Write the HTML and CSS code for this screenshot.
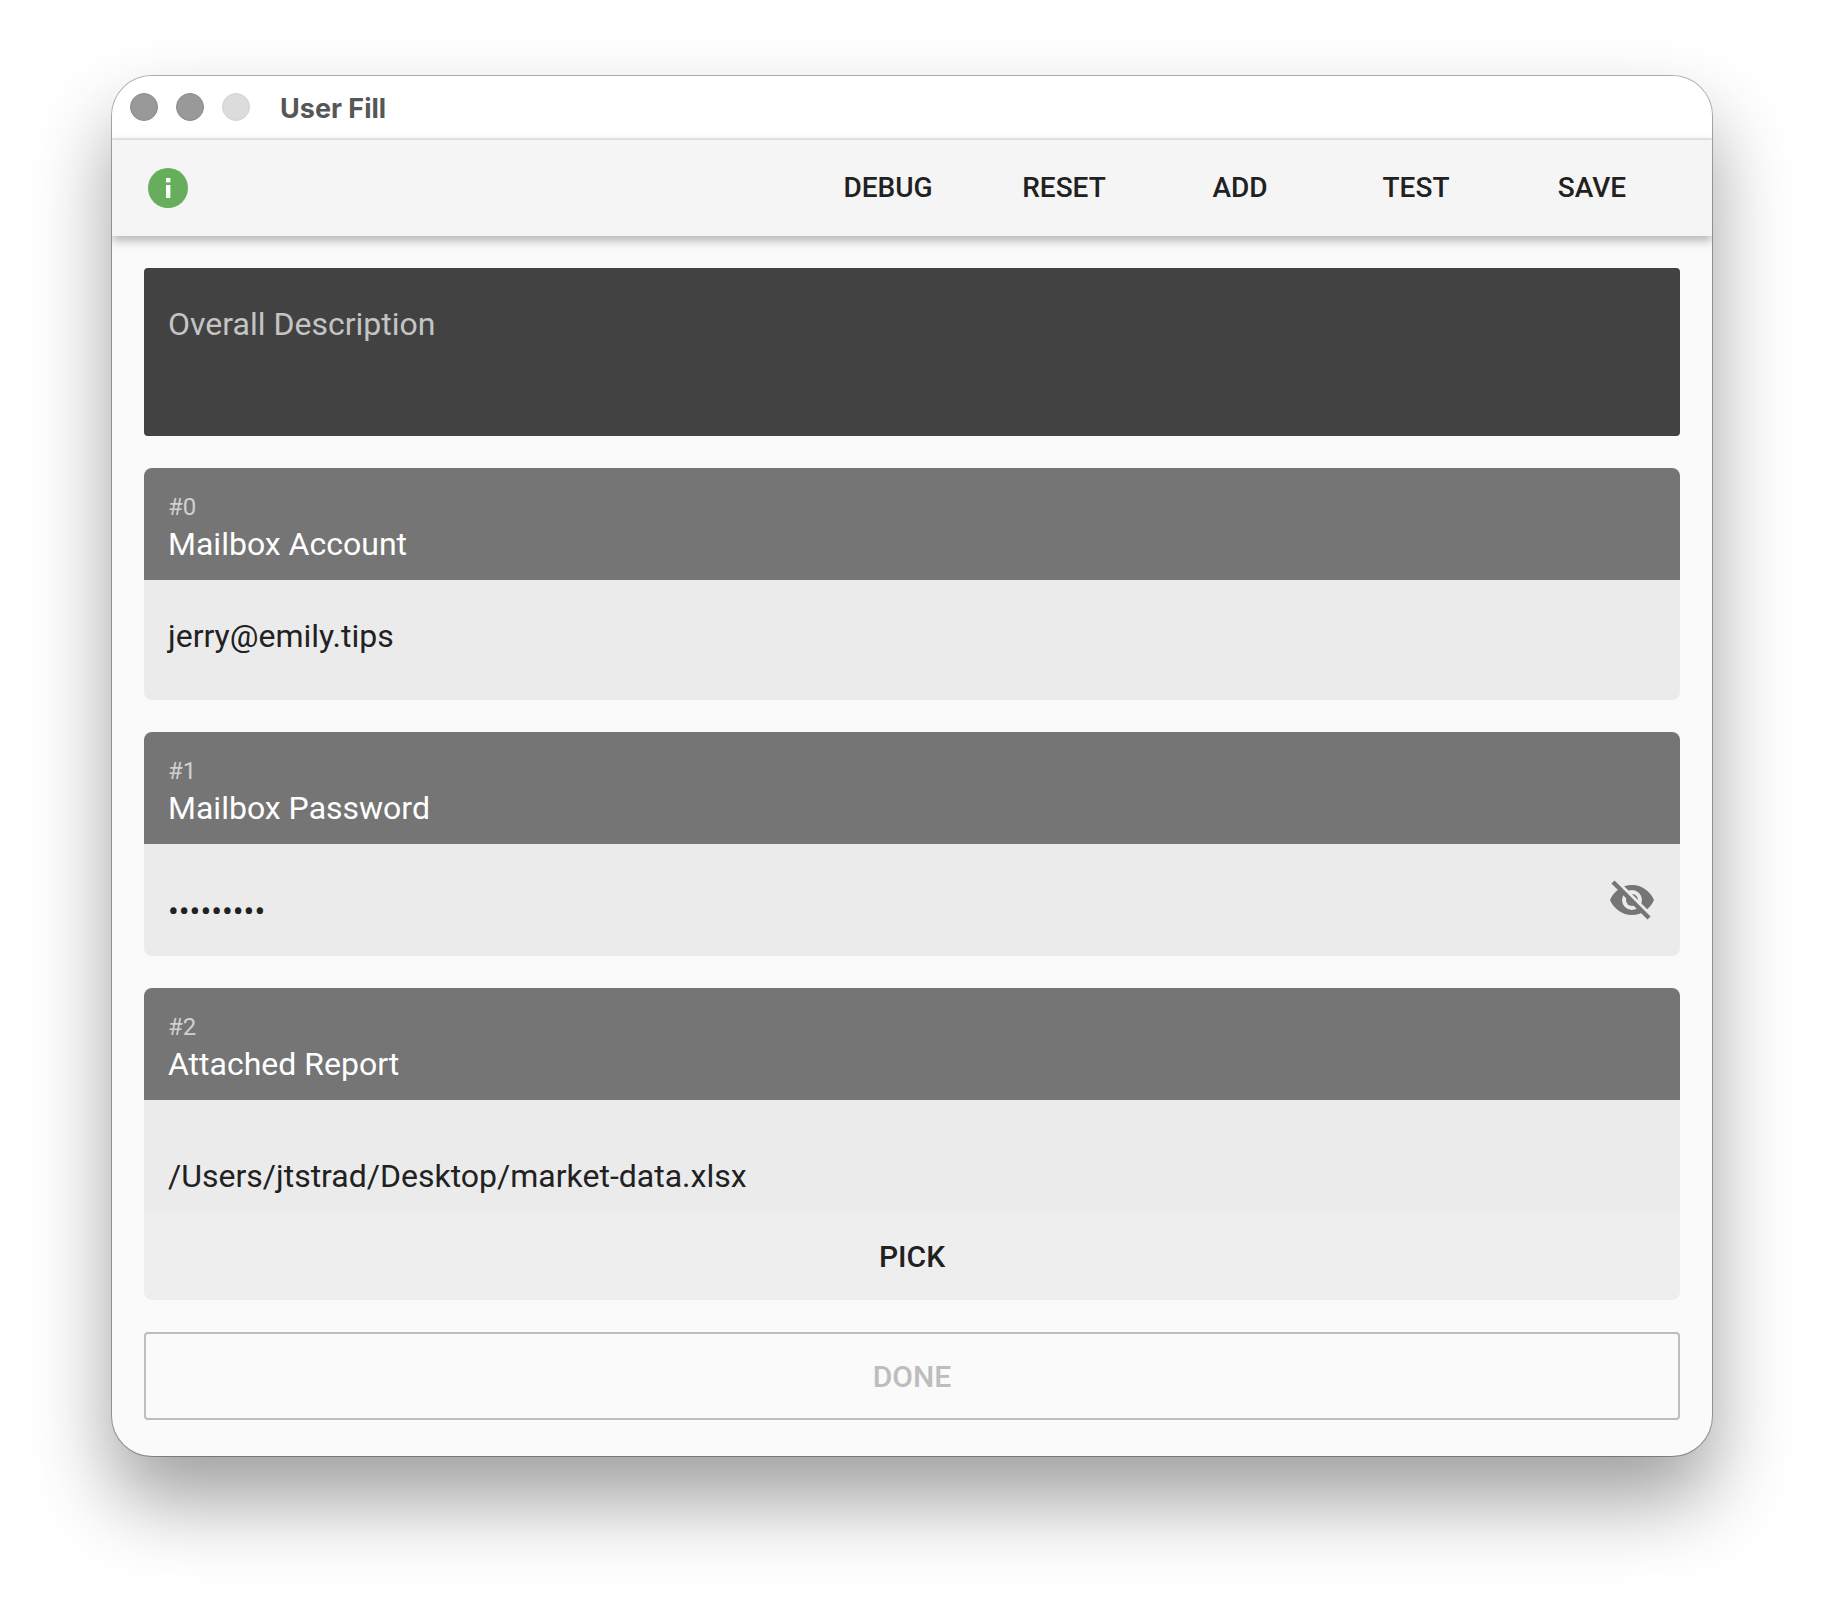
FILE: index.html
```html
<!DOCTYPE html>
<html>
<head>
  <title>User Fill</title>
  <meta charset="UTF-8">
  <link rel="stylesheet" href="styles.css">
</head>
<body>
  <div class="window">
    <div class="titlebar">
      <div class="lights">
        <span class="light"></span>
        <span class="light"></span>
        <span class="light light-off"></span>
      </div>
      <div class="title">User Fill</div>
    </div>

    <div class="toolbar">
      <svg class="info" viewBox="0 0 40 40" width="40" height="40">
        <circle cx="20" cy="20" r="20" fill="#66ad5c"/>
        <rect x="18" y="10" width="4.4" height="4.4" fill="#fff"/>
        <rect x="18" y="17" width="4.4" height="13" fill="#fff"/>
      </svg>
      <div class="actions">
        <button class="action">DEBUG</button>
        <button class="action">RESET</button>
        <button class="action">ADD</button>
        <button class="action">TEST</button>
        <button class="action">SAVE</button>
      </div>
    </div>

    <div class="content">
      <div class="description">Overall Description</div>

      <div class="card">
        <div class="card-head">
          <div class="card-index">#0</div>
          <div class="card-name">Mailbox Account</div>
        </div>
        <div class="card-body body-account">jerry@emily.tips</div>
      </div>

      <div class="card">
        <div class="card-head">
          <div class="card-index">#1</div>
          <div class="card-name">Mailbox Password</div>
        </div>
        <div class="card-body body-password">
          <span class="dots">•••••••••</span>
          <svg class="eye" viewBox="0 0 48 48" width="48" height="48">
            <path fill="#757575" fill-rule="evenodd" d="M24 9C14 9 5.800 15.200 2 24 5.800 32.800 14 39 24 39s18.200-6.200 22-15C42.200 15.200 34 9 24 9zM24 14a10 10 0 1 1 0 20 10 10 0 0 1 0-20z"/>
            <circle cx="24" cy="24" r="6" fill="#757575"/>
            <path d="M8 5 44 41" stroke="#ebebeb" stroke-width="4" fill="none"/>
            <path d="M5 6 41 42" stroke="#757575" stroke-width="4.400" fill="none"/>
          </svg>
        </div>
      </div>

      <div class="card">
        <div class="card-head">
          <div class="card-index">#2</div>
          <div class="card-name">Attached Report</div>
        </div>
        <div class="card-body body-report">/Users/jtstrad/Desktop/market-data.xlsx</div>
        <button class="pick">PICK</button>
      </div>

      <button class="done">DONE</button>
    </div>
  </div>
</body>
</html>
```

FILE: styles.css
```css
* {
  margin: 0;
  padding: 0;
  box-sizing: border-box;
}

body {
  min-height: 1604px;
  background-color: #fff;
  font-family: Roboto, sans-serif;
  color: #212121;
  padding: 76px 112px 0;
}

button {
  font-family: Roboto, sans-serif;
  border: none;
  background: none;
}

/* Window frame */
.window {
  width: 1600px;
  height: 1380px;
  background-color: #fafafa;
  border-radius: 40px;
  box-shadow: 0 0 0 1px rgba(0, 0, 0, 0.3), 0 44px 80px rgba(0, 0, 0, 0.38);
  overflow: hidden;
}

.titlebar {
  display: flex;
  align-items: center;
  height: 64px;
  background-color: #fff;
  border-bottom: 2px solid #ebebeb;
  padding-left: 18px;
}

.lights {
  display: flex;
  gap: 18px;
}

.light {
  width: 28px;
  height: 28px;
  border-radius: 50%;
  background-color: #999;
  border: 1px solid #8a8a8a;
}

.light-off {
  background-color: #dcdcdc;
  border-color: #d2d2d2;
}

.title {
  margin-left: 30px;
  padding-top: 3px;
  font-family: Inter, sans-serif;
  font-size: 27px;
  font-weight: 700;
  color: #565656;
}

/* Toolbar */
.toolbar {
  display: flex;
  align-items: center;
  justify-content: space-between;
  height: 96px;
  padding: 0 32px 0 36px;
  background-color: #f5f5f5;
  box-shadow: 0 4px 10px rgba(0, 0, 0, 0.3);
  position: relative;
}

.actions {
  display: flex;
}

.action {
  width: 176px;
  height: 72px;
  padding-bottom: 2px;
  font-size: 28px;
  font-weight: 500;
  color: #212121;
}

/* Form */
.content {
  display: flex;
  flex-direction: column;
  gap: 32px;
  padding: 32px;
}

.description {
  height: 168px;
  padding: 37px 24px 0;
  background-color: #424242;
  border-radius: 4px;
  font-size: 32px;
  color: #c4c4c4;
}

.card {
  border-radius: 8px;
  overflow: hidden;
}

.card-head {
  height: 112px;
  padding: 25px 24px 0;
  background-color: #757575;
  color: #fff;
}

.card-index {
  font-size: 24px;
  line-height: 28px;
  color: #d0d0d0;
}

.card-name {
  font-size: 32px;
  line-height: 46px;
}

.card-body {
  background-color: #ebebeb;
  font-size: 32px;
  padding-left: 24px;
}

.body-account {
  height: 120px;
  padding-top: 37px;
}

.body-password {
  display: flex;
  justify-content: space-between;
  height: 112px;
  padding-right: 24px;
}

.dots {
  padding-top: 48px;
}

.eye {
  margin-top: 32px;
}

.body-report {
  height: 112px;
  padding-top: 57px;
}

.pick {
  display: block;
  width: 100%;
  height: 88px;
  background-color: #eee;
  font-size: 30px;
  font-weight: 500;
  color: #212121;
}

.done {
  height: 88px;
  border: 2px solid #bdbdbd;
  border-radius: 4px;
  font-size: 30px;
  font-weight: 500;
  color: #bdbdbd;
}
```
